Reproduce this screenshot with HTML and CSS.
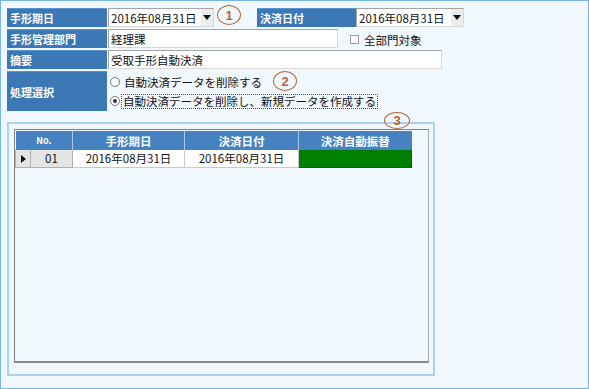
FILE: index.html
```html
<!DOCTYPE html>
<html lang="ja">
<head>
    <meta charset="UTF-8">
    <title>受取手形自動決済</title>
    <link rel="stylesheet" href="styles.css">
</head>
<body>
    <div class="window">
        <div class="form">
            <div class="row">
                <div class="label">手形期日</div>
                <div class="select select-left">
                    <span>2016年08月31日</span>
                    <span class="arrow"></span>
                </div>
                <span class="mark mark-1">1</span>
                <div class="label label-right">決済日付</div>
                <div class="select select-right">
                    <span>2016年08月31日</span>
                    <span class="arrow"></span>
                </div>
            </div>
            <div class="row">
                <div class="label">手形管理部門</div>
                <div class="input input-dept">経理課</div>
                <div class="check"><span class="box"></span>全部門対象</div>
            </div>
            <div class="row">
                <div class="label">摘要</div>
                <div class="input input-memo">受取手形自動決済</div>
            </div>
            <div class="row row-tall">
                <div class="label">処理選択</div>
                <div class="options">
                    <div class="option">
                        <span class="radio"></span>
                        <span class="option-text">自動決済データを削除する</span>
                        <span class="mark mark-2">2</span>
                    </div>
                    <div class="option">
                        <span class="radio on"></span>
                        <span class="option-text focus">自動決済データを削除し、新規データを作成する</span>
                    </div>
                </div>
            </div>
        </div>

        <div class="panel">
            <span class="mark mark-3">3</span>
            <div class="grid">
                <table>
                    <thead>
                        <tr>
                            <th class="col-no" colspan="2">No.</th>
                            <th class="col-date">手形期日</th>
                            <th class="col-date2">決済日付</th>
                            <th class="col-auto">決済自動振替</th>
                        </tr>
                    </thead>
                    <tbody>
                        <tr>
                            <td class="pointer"><span class="tri"></span></td>
                            <td class="num">01</td>
                            <td>2016年08月31日</td>
                            <td>2016年08月31日</td>
                            <td class="green"></td>
                        </tr>
                    </tbody>
                </table>
            </div>
        </div>
    </div>
</body>
</html>
```

FILE: styles.css
```css
* {
    box-sizing: border-box;
}
body {
    margin: 0;
    font-family: "Noto Sans CJK JP", "Liberation Sans", sans-serif;
    font-size: 11.5px;
    color: #111;
}
.window {
    width: 589px;
    height: 389px;
    border: 1px solid #78b4e6;
    background-color: #f0f7fd;
    padding: 7px 0 0 6px;
}
.form {
    display: flex;
    flex-direction: column;
    gap: 2px;
}
.row {
    display: flex;
    align-items: center;
    height: 19px;
}
.row-tall {
    height: 40px;
    align-items: stretch;
}
.label {
    width: 100px;
    height: 100%;
    background-color: #3b78b5;
    border-top: 1px solid #5c93c8;
    color: white;
    font-weight: bold;
    font-size: 11px;
    padding-left: 3px;
    display: flex;
    align-items: center;
    flex-shrink: 0;
}
.label-right {
    width: 99px;
    margin-left: 16px;
}
.select,
.input {
    height: 100%;
    margin-left: 1px;
    background-color: white;
    border: 1px solid #a4a4a4;
    border-right-color: #d8d8d8;
    border-bottom-color: #d8d8d8;
    display: flex;
    align-items: center;
    padding-left: 2px;
}
.select {
    justify-content: space-between;
}
.select-left {
    width: 106px;
}
.select-right {
    width: 108px;
    margin-left: 0;
}
.arrow {
    width: 12px;
    height: 100%;
    display: flex;
    align-items: center;
    justify-content: center;
    background-color: #ececec;
}
.arrow::after {
    content: "";
    border-left: 4px solid transparent;
    border-right: 4px solid transparent;
    border-top: 5px solid #111;
}
.input-dept {
    width: 230px;
}
.input-memo {
    width: 334px;
}
.check {
    display: flex;
    align-items: center;
    margin-left: 12px;
    margin-top: 2px;
}
.box {
    width: 9px;
    height: 9px;
    border: 1px solid #9a9a9a;
    background-color: white;
    margin-right: 5px;
}
.options {
    display: flex;
    flex-direction: column;
    justify-content: center;
    gap: 4px;
    padding-left: 3px;
    padding-top: 1px;
}
.option {
    display: flex;
    align-items: center;
    height: 15px;
}
.radio {
    width: 10px;
    height: 10px;
    border: 1px solid #777;
    border-radius: 50%;
    background-color: white;
    margin-right: 3px;
    display: flex;
    align-items: center;
    justify-content: center;
}
.radio.on::after {
    content: "";
    width: 4px;
    height: 4px;
    border-radius: 50%;
    background-color: #333;
}
.option-text {
    padding: 0 1px;
    line-height: 13px;
}
.focus {
    border: 1px dotted #444;
    margin-left: -2px;
}
.mark {
    width: 24px;
    height: 20px;
    border: 1.5px solid #b5652d;
    border-radius: 50%;
    color: #b5652d;
    font-family: "Liberation Sans", sans-serif;
    font-weight: bold;
    font-size: 13px;
    display: flex;
    align-items: center;
    justify-content: center;
    flex-shrink: 0;
}
.mark-1 {
    margin-left: 3px;
    margin-top: -5px;
}
.mark-2 {
    margin-left: 10px;
    margin-top: -2px;
}
.panel {
    position: relative;
    margin-top: 11px;
    width: 428px;
    height: 254px;
    border: 2px solid #a9d1f0;
    padding: 5px 0 0 5px;
}
.mark-3 {
    position: absolute;
    top: -12px;
    left: 375px;
    width: 26px;
    height: 17px;
    background-color: transparent;
}
.grid {
    width: 415px;
    height: 234px;
    border: 1px solid #808080;
    border-right-color: #a8a8a8;
    border-bottom: 2px solid #8a8a8a;
    padding-top: 1px;
}
table {
    border-collapse: collapse;
    table-layout: fixed;
}
th {
    height: 19px;
    background-color: #4582bf;
    color: white;
    font-weight: bold;
    font-size: 11.5px;
    border-left: 1px solid #a9c8e6;
    padding: 0;
}
th:first-child {
    border-left: none;
}
.col-no {
    width: 57px;
    font-size: 9px;
}
.col-date {
    width: 112px;
}
.col-date2 {
    width: 114px;
}
.col-auto {
    width: 113px;
}
td {
    height: 17px;
    padding: 0;
    text-align: center;
    background-color: white;
    border: 1px solid #c8c8c8;
    border-top: none;
}
.pointer {
    width: 15px;
    background-color: #e4e4e4;
    border-color: #b0b0b0;
}
.tri {
    display: inline-block;
    border-top: 4px solid transparent;
    border-bottom: 4px solid transparent;
    border-left: 5px solid #111;
}
.num {
    width: 42px;
    background-color: #e4e4e4;
    border-color: #b0b0b0;
}
.green {
    background-color: #008000;
    border-color: #006400;
}
```
